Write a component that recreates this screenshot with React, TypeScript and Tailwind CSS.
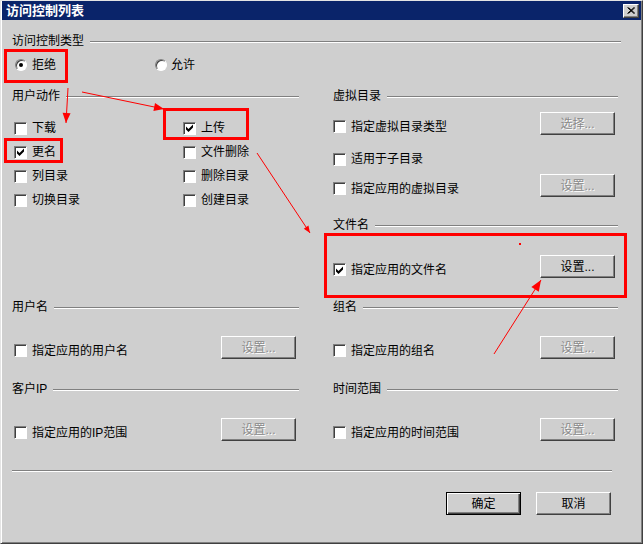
import React from "react";

// 访问控制列表 dialog (classic Windows look) with red annotation marks on top

type Pt = [number, number];

function Check({ checked }: { checked?: boolean }) {
  return (
    <span className="w-[13px] h-[13px] shrink-0 bg-white border border-t-[#808080] border-l-[#808080] border-r-white border-b-white shadow-[inset_1px_1px_#404040] flex items-center justify-center">
      {checked && (
        <svg width="7" height="8" viewBox="0 0 7 8">
          <path d="M0 2.5 L2.5 5 L7 0.5 L7 3.5 L2.5 8 L0 5.5 Z" fill="#000" />
        </svg>
      )}
    </span>
  );
}

function Radio({ checked }: { checked?: boolean }) {
  return (
    <span className="w-[12px] h-[12px] shrink-0 rounded-full bg-white border border-t-[#808080] border-l-[#808080] border-r-white border-b-white shadow-[inset_1px_1px_#404040] flex items-center justify-center">
      {checked && <span className="w-[4px] h-[4px] rounded-full bg-black" />}
    </span>
  );
}

function CheckItem({ label, checked }: { label: string; checked?: boolean }) {
  return (
    <div className="flex items-center gap-[5px]">
      <Check checked={checked} />
      <span className="leading-[16px]">{label}</span>
    </div>
  );
}

function Btn({ label, disabled, isDefault }: { label: string; disabled?: boolean; isDefault?: boolean }) {
  if (isDefault) {
    return (
      <div className="w-[75px] h-[23px] shrink-0 flex items-center justify-center border border-black shadow-[inset_1px_1px_#fff,inset_-1px_-1px_#404040,inset_-2px_-2px_#808080] text-black leading-[16px]">
        {label}
      </div>
    );
  }
  return (
    <div
      className={
        disabled
          ? "w-[75px] h-[23px] shrink-0 flex items-center justify-center border border-t-white border-l-white border-r-[#404040] border-b-[#404040] shadow-[inset_-1px_-1px_#808080] text-[#8a8a8a] [text-shadow:1px_1px_0_#fff] leading-[16px]"
          : "w-[75px] h-[23px] shrink-0 flex items-center justify-center border border-t-white border-l-white border-r-[#404040] border-b-[#404040] shadow-[inset_-1px_-1px_#808080] text-black leading-[16px]"
      }
    >
      {label}
    </div>
  );
}

function Header({ label }: { label: string }) {
  return (
    <div className="flex items-center gap-[6px] h-[16px]">
      <span className="leading-[16px] whitespace-nowrap">{label}</span>
      <div className="flex-1 h-[2px] mt-[2px] border-t border-t-[#808080] border-b border-b-white" />
    </div>
  );
}

function BtnRow({ label, checked, btn, disabled, className }: { label: string; checked?: boolean; btn: string; disabled?: boolean; className: string }) {
  return (
    <div className={className}>
      <div className="mt-[6px]">
        <CheckItem label={label} checked={checked} />
      </div>
      <Btn label={btn} disabled={disabled} />
    </div>
  );
}

function arrowHead(from: Pt, tip: Pt, len = 10, half = 4) {
  const dx = tip[0] - from[0];
  const dy = tip[1] - from[1];
  const d = Math.hypot(dx, dy);
  const ux = dx / d;
  const uy = dy / d;
  const bx = tip[0] - ux * len;
  const by = tip[1] - uy * len;
  return `${tip[0]},${tip[1]} ${bx - uy * half},${by + ux * half} ${bx + uy * half},${by - ux * half}`;
}

const arrows: { from: Pt; to: Pt; head: number }[] = [
  { from: [68, 88], to: [66, 123], head: 10 },
  { from: [82, 92], to: [164, 109], head: 10 },
  { from: [257, 153], to: [310, 233], head: 7 },
  { from: [494, 354], to: [541, 280], head: 11 },
];

export default function App() {
  return (
    <div className="relative w-[643px] h-[544px] bg-[#cfcfcf] border border-t-[#e4e4e4] border-l-[#e4e4e4] border-r-[#404040] border-b-[#404040] shadow-[inset_1px_0_#fff,inset_-1px_-1px_#808080] flex flex-col text-[12px] text-black [font-family:'Liberation_Sans','Noto_Sans_CJK_SC',sans-serif] overflow-hidden">
      {/* title bar */}
      <div className="mx-[1px] h-[19px] bg-[#0a246a] flex items-center justify-between">
        <span className="pl-[4px] text-white font-bold text-[13px] leading-[16px]">访问控制列表</span>
        <div className="mr-[2px] w-[16px] h-[14px] bg-[#cfcfcf] border border-t-white border-l-white border-r-[#404040] border-b-[#404040] shadow-[inset_-1px_-1px_#808080] flex items-center justify-center">
          <svg width="8" height="7" viewBox="0 0 8 7">
            <path d="M0.5 0.5 L7 6.5 M1.5 0.5 L8 6.5 M7 0.5 L0.5 6.5 M8 0.5 L1.5 6.5" stroke="#000" strokeWidth="1" fill="none" />
          </svg>
        </div>
      </div>

      <div className="pl-[11px] pt-[13px] flex flex-col">
        {/* 访问控制类型 */}
        <div className="w-[609px]">
          <Header label="访问控制类型" />
        </div>
        <div className="flex items-center h-[24px] mt-[4px] ml-[3px]">
          <div className="w-[140px] flex items-center gap-[5px]">
            <Radio checked />
            <span className="leading-[16px]">拒绝</span>
          </div>
          <div className="flex items-center gap-[4px]">
            <Radio />
            <span className="leading-[16px]">允许</span>
          </div>
        </div>

        <div className="grid grid-cols-[287px_285px] gap-x-[34px] mt-[11px]">
          {/* 用户动作 */}
          <div className="flex flex-col">
            <Header label="用户动作" />
            <div className="grid grid-cols-[169px_1fr] auto-rows-[24px] items-center mt-[12px] ml-[2px]">
              <CheckItem label="下载" />
              <CheckItem label="上传" checked />
              <CheckItem label="更名" checked />
              <CheckItem label="文件删除" />
              <CheckItem label="列目录" />
              <CheckItem label="删除目录" />
              <CheckItem label="切换目录" />
              <CheckItem label="创建目录" />
            </div>
          </div>

          {/* 虚拟目录 + 文件名 */}
          <div className="flex flex-col">
            <Header label="虚拟目录" />
            <BtnRow className="flex items-center justify-between h-[23px] mt-[8px] pr-[3px]" label="指定虚拟目录类型" btn="选择..." disabled />
            <div className="flex items-center h-[24px] mt-[12px]">
              <CheckItem label="适用于子目录" />
            </div>
            <BtnRow className="flex items-center justify-between h-[23px] mt-[3px] pr-[3px]" label="指定应用的虚拟目录" btn="设置..." disabled />
            <div className="mt-[20px]">
              <Header label="文件名" />
            </div>
            <BtnRow className="flex items-center justify-between h-[23px] mt-[22px] pr-[3px]" label="指定应用的文件名" btn="设置..." checked />
          </div>

          {/* 用户名 */}
          <div className="flex flex-col">
            <div className="mt-[21px]">
              <Header label="用户名" />
            </div>
            <BtnRow className="flex items-center justify-between h-[23px] mt-[21px] pr-[3px] pl-[2px]" label="指定应用的用户名" btn="设置..." disabled />
          </div>

          {/* 组名 */}
          <div className="flex flex-col">
            <div className="mt-[21px]">
              <Header label="组名" />
            </div>
            <BtnRow className="flex items-center justify-between h-[23px] mt-[21px] pr-[3px]" label="指定应用的组名" btn="设置..." disabled />
          </div>

          {/* 客户IP */}
          <div className="flex flex-col">
            <div className="mt-[22px]">
              <Header label="客户IP" />
            </div>
            <BtnRow className="flex items-center justify-between h-[23px] mt-[21px] pr-[3px] pl-[2px]" label="指定应用的IP范围" btn="设置..." disabled />
          </div>

          {/* 时间范围 */}
          <div className="flex flex-col">
            <div className="mt-[22px]">
              <Header label="时间范围" />
            </div>
            <BtnRow className="flex items-center justify-between h-[23px] mt-[21px] pr-[3px]" label="指定应用的时间范围" btn="设置..." disabled />
          </div>
        </div>

        <div className="w-[600px] h-[2px] mt-[29px] border-t border-t-[#808080] border-b border-b-white" />

        <div className="w-[600px] flex justify-end gap-[15px] mt-[20px] pr-[1px]">
          <Btn label="确定" isDefault />
          <Btn label="取消" />
        </div>
      </div>

      {/* red annotation marks */}
      <svg className="absolute left-[-1px] top-[-1px] w-[643px] h-[544px] pointer-events-none" viewBox="0 0 643 544">
        <rect x="5.5" y="50.5" width="61" height="31" fill="none" stroke="#ff0000" strokeWidth="3" />
        <rect x="164.5" y="109.5" width="83" height="29" fill="none" stroke="#ff0000" strokeWidth="3" />
        <rect x="5.5" y="139.5" width="56" height="22" fill="none" stroke="#ff0000" strokeWidth="3" />
        <rect x="325.5" y="234.5" width="300" height="62" fill="none" stroke="#ff0000" strokeWidth="3" />
        {arrows.map((a, i) => (
          <g key={i}>
            <line x1={a.from[0]} y1={a.from[1]} x2={a.to[0]} y2={a.to[1]} stroke="#ff0000" strokeWidth="1" />
            <polygon points={arrowHead(a.from, a.to, a.head, a.head * 0.4)} fill="#ff0000" />
          </g>
        ))}
        <rect x="519" y="243" width="2" height="2" fill="#ff0000" />
      </svg>
    </div>
  );
}
